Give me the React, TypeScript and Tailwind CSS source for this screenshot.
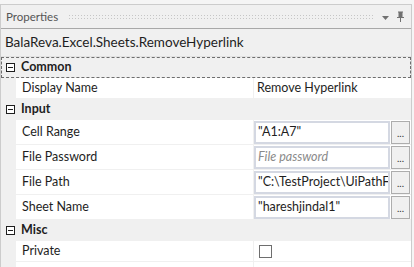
import React from 'react';

const font = { fontFamily: 'Lato, "Noto Sans", sans-serif' };

const Minus = () => (
  <div className="w-[9px] h-[9px] border border-[#1e1e1e] flex items-center justify-center bg-white">
    <div className="w-[5px] h-px bg-[#1e1e1e]" />
  </div>
);

const Category = ({ label, focused }: { label: string; focused?: boolean }) => (
  <div
    className={`flex items-center h-[21px] bg-[#f0f0f0] ${
      focused ? 'border border-dashed border-[#6e6e6e]' : 'border border-transparent'
    }`}
  >
    <div className="w-[15px] flex justify-center pl-[1px]">
      <Minus />
    </div>
    <span className="pl-[4px] text-[12.5px] font-bold text-[#1e1e1e]">{label}</span>
  </div>
);

const Row = ({ name, h = 'h-[21px]', children }: { name: string; h?: string; children?: React.ReactNode }) => (
  <div className={`flex ${h}`}>
    <div className="w-[15px] bg-[#f0f0f0] shrink-0" />
    <div className="w-[237px] flex items-center pl-[6px] bg-white border-b border-[#f0f0f0] text-[12.5px] text-[#1e1e1e]">
      {name}
    </div>
    <div className="flex-1 flex items-center bg-white border-b border-l border-[#f0f0f0] min-w-0">{children}</div>
  </div>
);

const TextBox = ({ value, placeholder }: { value?: string; placeholder?: string }) => (
  <div className="flex items-center w-full h-full py-[1px] pr-[1px]">
    <div className="flex-1 min-w-0 h-[23px] bg-white border-2 border-[#d4d8e2] flex items-center pl-[2px] overflow-hidden whitespace-nowrap text-[12.5px]">
      {value ? (
        <span className="text-[#1e1e1e]">{value}</span>
      ) : (
        <span className="italic text-[#8a8a8a]">{placeholder}</span>
      )}
    </div>
    <div className="ml-[1px] w-[19px] h-[23px] bg-[#f0f0f0] border border-[#adadad] flex items-end justify-center pb-[5px] text-[10px] leading-none text-[#333] shrink-0">
      ...
    </div>
  </div>
);

export default function App() {
  return (
    <div className="w-[414px] h-[267px] overflow-hidden bg-[#f5f5f5]" style={font}>
      <div className="h-[4px] bg-[#f5f5f5]" />
      <div className="border-t border-l border-r border-[#cccccc] mr-[2px]">
        {/* title bar */}
        <div className="h-[23px] flex items-center bg-[#f0f0f0] pl-[5px] pr-[6px]">
          <span className="text-[11.5px] text-[#555555]">Properties</span>
          <div
            className="flex-1 h-[5px] ml-[10px] mr-[8px]"
            style={{
              backgroundImage: 'radial-gradient(circle, #c6c6c6 0.8px, transparent 0.9px)',
              backgroundSize: '3px 3px',
            }}
          />
          <svg width="9" height="6" viewBox="0 0 9 6" className="mr-[6px] mt-[3px]">
            <path d="M1 1 L8 1 L4.5 5 Z" fill="#717171" />
          </svg>
          <svg width="9" height="12" viewBox="0 0 9 12">
            <path d="M2 1 H7 M3 1 V6 M6 1 V6 M1 6.5 H8 M4.5 7 V11" stroke="#717171" strokeWidth="1" fill="none" />
            <rect x="3" y="1" width="3" height="5" fill="#717171" />
          </svg>
        </div>
        <div className="h-px bg-[#a8a8a8]" />
        {/* selected object */}
        <div className="h-[27px] flex items-center pl-[4px] bg-[#f0f0f0] text-[13.5px] text-[#1e1e1e]">
          BalaReva.Excel.Sheets.RemoveHyperlink
        </div>
        <div className="h-px bg-[#e2e2e2]" />
        <Category label="Common" focused />
        <Row name="Display Name">
          <span className="pl-[3px] text-[12.5px] text-[#1e1e1e]">Remove Hyperlink</span>
        </Row>
        <Category label="Input" />
        <Row name="Cell Range" h="h-[25px]">
          <TextBox value={'"A1:A7"'} />
        </Row>
        <Row name="File Password" h="h-[25px]">
          <TextBox placeholder="File password" />
        </Row>
        <Row name="File Path" h="h-[25px]">
          <TextBox value={'"C:\\TestProject\\UiPathFc'} />
        </Row>
        <Row name="Sheet Name" h="h-[25px]">
          <TextBox value={'"hareshjindal1"'} />
        </Row>
        <Category label="Misc" />
        <Row name="Private">
          <div className="ml-[5px] w-[13px] h-[13px] border border-[#6e6e6e] bg-white" />
        </Row>
        <Row name="" />
      </div>
    </div>
  );
}
